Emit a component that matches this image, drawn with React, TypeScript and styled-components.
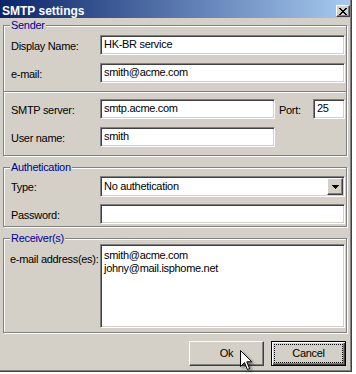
import React from "react";
import styled, { createGlobalStyle, css } from "styled-components";

const GlobalStyle = createGlobalStyle`
  html, body { margin: 0; padding: 0; background: #ffffff; }
  body {
    font-family: "Liberation Sans", Arial, sans-serif;
    font-size: 11px;
    letter-spacing: -0.3px;
    color: #000;
  }
  #root { width: 356px; height: 374px; overflow: hidden; }
`;

const Dialog = styled.div`
  position: relative;
  box-sizing: border-box;
  width: 352px;
  height: 372px;
  padding-right: 1px;
  background: #d4d0c8;
  border-right: 1px solid #404040;
  border-bottom: 1px solid #404040;
  box-shadow: inset -1px -1px 0 #808080;
  display: flex;
  flex-direction: column;
`;

const TitleBar = styled.div`
  box-sizing: border-box;
  height: 18px;
  padding: 4px 0 0 2px;
  display: flex;
  align-items: flex-start;
  justify-content: space-between;
  background: linear-gradient(to right, #0a246a, #a6caf0);
  color: #fff;
  font-weight: bold;
  font-size: 12px;
  line-height: 14px;
  letter-spacing: 0;
`;

const Raised = css`
  box-sizing: border-box;
  background: #d4d0c8;
  border: 1px solid;
  border-color: #fff #404040 #404040 #fff;
  box-shadow: inset -1px -1px 0 #808080;
`;

const CloseButton = styled.div`
  ${Raised};
  width: 14px;
  height: 12px;
  margin: 1px 0 0 0;
  display: flex;
  align-items: center;
  justify-content: center;
`;

const Body = styled.div`
  flex: 1;
  display: flex;
  flex-direction: column;
  padding: 7px 3px 0 3px;
`;

const Group = styled.div<{ $mt: number; $pt: number; $pb: number }>`
  position: relative;
  margin-top: ${(p) => p.$mt}px;
  border: 1px solid #808080;
  box-shadow: inset 1px 1px 0 #fff, 1px 1px 0 #fff;
  padding: ${(p) => p.$pt}px 1px ${(p) => p.$pb}px 7px;
  display: flex;
  flex-direction: column;
`;

const Legend = styled.span`
  position: absolute;
  left: 6px;
  top: -7px;
  padding: 0 1px;
  background: #d4d0c8;
  color: #0000a0;
  line-height: 13px;
`;

const Rows = styled.div<{ $gap: number }>`
  display: flex;
  flex-direction: column;
  gap: ${(p) => p.$gap}px;
`;

const Row = styled.div`
  display: grid;
  grid-template-columns: 89px 1fr;
  align-items: start;
`;

const Label = styled.span<{ $pt?: number; $dx?: number }>`
  padding-top: ${(p) => p.$pt ?? 5}px;
  margin-left: ${(p) => p.$dx ?? 0}px;
  line-height: 13px;
  white-space: nowrap;
`;

const Separator = styled.div`
  height: 0;
  border-top: 1px solid #808080;
  border-bottom: 1px solid #fff;
  margin: 8px -1px 6px -7px;
`;

const Sunken = css`
  box-sizing: border-box;
  background: #fff;
  border: 1px solid;
  border-color: #808080 #fff #fff #808080;
  box-shadow: inset 1px 1px 0 #404040, inset -1px -1px 0 #d4d0c8;
`;

const TextField = styled.input<{ $w?: number }>`
  ${Sunken};
  display: block;
  width: ${(p) => (p.$w ? `${p.$w}px` : "100%")};
  height: 20px;
  margin: 0;
  padding: 0 2px 2px 3px;
  font: inherit;
  letter-spacing: inherit;
  color: #000;
  outline: none;
`;

const InlineControls = styled.div`
  display: flex;
  align-items: flex-start;
`;

const PortLabel = styled(Label)`
  width: 34px;
  margin-left: 4px;
`;

const Combo = styled.div`
  ${Sunken};
  height: 21px;
  padding: 1px;
  display: flex;
`;

const ComboText = styled.span`
  flex: 1;
  padding: 2px 0 0 2px;
  line-height: 13px;
`;

const ComboButton = styled.span`
  ${Raised};
  width: 16px;
  display: flex;
  align-items: center;
  justify-content: center;
`;

const MultiLine = styled.textarea`
  ${Sunken};
  display: block;
  width: 100%;
  height: 84px;
  margin: 0;
  padding: 4px 2px 0 3px;
  font: inherit;
  letter-spacing: inherit;
  line-height: 13px;
  color: #000;
  resize: none;
  overflow: hidden;
  outline: none;
`;

const Buttons = styled.div`
  display: flex;
  justify-content: flex-end;
  gap: 7px;
  margin-top: 8px;
  padding-right: 1px;
`;

const PushButton = styled.button<{ $default?: boolean }>`
  ${Raised};
  width: 75px;
  height: 25px;
  padding: 0;
  display: flex;
  font: inherit;
  letter-spacing: inherit;
  color: #000;
  ${(p) =>
    p.$default &&
    css`
      border: 1px solid #000;
      box-shadow: inset 1px 1px 0 #fff, inset -1px -1px 0 #404040,
        inset -2px -2px 0 #808080;
    `}
`;

const Caption = styled.span<{ $focus?: boolean }>`
  flex: 1;
  margin: 2px;
  border: 1px ${(p) => (p.$focus ? "dotted #000" : "solid transparent")};
  display: flex;
  align-items: center;
  justify-content: center;
  line-height: 13px;
`;

const Pointer = styled.svg`
  position: absolute;
  left: 240px;
  top: 350px;
  overflow: visible;
  filter: drop-shadow(2px 2px 1.5px rgba(0, 0, 0, 0.45));
`;

const CloseGlyph = () => (
  <svg width="8" height="7" viewBox="0 0 8 7">
    <path
      d="M0 0h2v1h1v1h2V1h1V0h2v1H7v1H6v1H5v1h1v1h1v1h1v1H6V6H5V5H3v1H2v1H0V6h1V5h1V4h1V3H2V2H1V1H0z"
      fill="#000"
    />
  </svg>
);

const DownArrow = () => (
  <svg width="7" height="4" viewBox="0 0 7 4">
    <path d="M0 0h7v1H6v1H5v1H4v1H3V3H2V2H1V1H0z" fill="#000" />
  </svg>
);

export default function App() {
  return (
    <>
      <GlobalStyle />
      <Dialog>
        <TitleBar>
          <span>SMTP settings</span>
          <CloseButton>
            <CloseGlyph />
          </CloseButton>
        </TitleBar>
        <Body>
          <Group $mt={0} $pt={9} $pb={8}>
            <Legend>Sender</Legend>
            <Rows $gap={8}>
              <Row>
                <Label>Display Name:</Label>
                <TextField readOnly value="HK-BR service" />
              </Row>
              <Row>
                <Label>e-mail:</Label>
                <TextField readOnly value="smith@acme.com" />
              </Row>
            </Rows>
            <Separator />
            <Rows $gap={8}>
              <Row>
                <Label>SMTP server:</Label>
                <InlineControls>
                  <TextField $w={175} readOnly value="smtp.acme.com" />
                  <PortLabel>Port:</PortLabel>
                  <TextField $w={32} readOnly value="25" />
                </InlineControls>
              </Row>
              <Row>
                <Label>User name:</Label>
                <TextField $w={175} readOnly value="smith" />
              </Row>
            </Rows>
          </Group>

          <Group $mt={11} $pt={8} $pb={2}>
            <Legend>Authetication</Legend>
            <Rows $gap={7}>
              <Row>
                <Label>Type:</Label>
                <Combo>
                  <ComboText>No authetication</ComboText>
                  <ComboButton>
                    <DownArrow />
                  </ComboButton>
                </Combo>
              </Row>
              <Row>
                <Label>Password:</Label>
                <TextField readOnly value="" />
              </Row>
            </Rows>
          </Group>

          <Group $mt={11} $pt={5} $pb={4}>
            <Legend>Receiver(s)</Legend>
            <Row>
              <Label $pt={9} $dx={-1}>
                e-mail address(es):
              </Label>
              <MultiLine
                readOnly
                value={"smith@acme.com\njohny@mail.isphome.net"}
              />
            </Row>
          </Group>

          <Buttons>
            <PushButton type="button">
              <Caption>Ok</Caption>
            </PushButton>
            <PushButton type="button" $default>
              <Caption $focus>Cancel</Caption>
            </PushButton>
          </Buttons>
        </Body>
        <Pointer width="13" height="21" viewBox="0 0 13 21">
          <path
            d="M0.5 0.5 L0.5 16.5 L4.5 12.6 L7.4 19.5 L9.6 18.5 L6.8 11.8 L11.8 11.8 Z"
            fill="#fff"
            stroke="#000"
            strokeWidth="1"
            strokeLinejoin="miter"
          />
        </Pointer>
      </Dialog>
    </>
  );
}
